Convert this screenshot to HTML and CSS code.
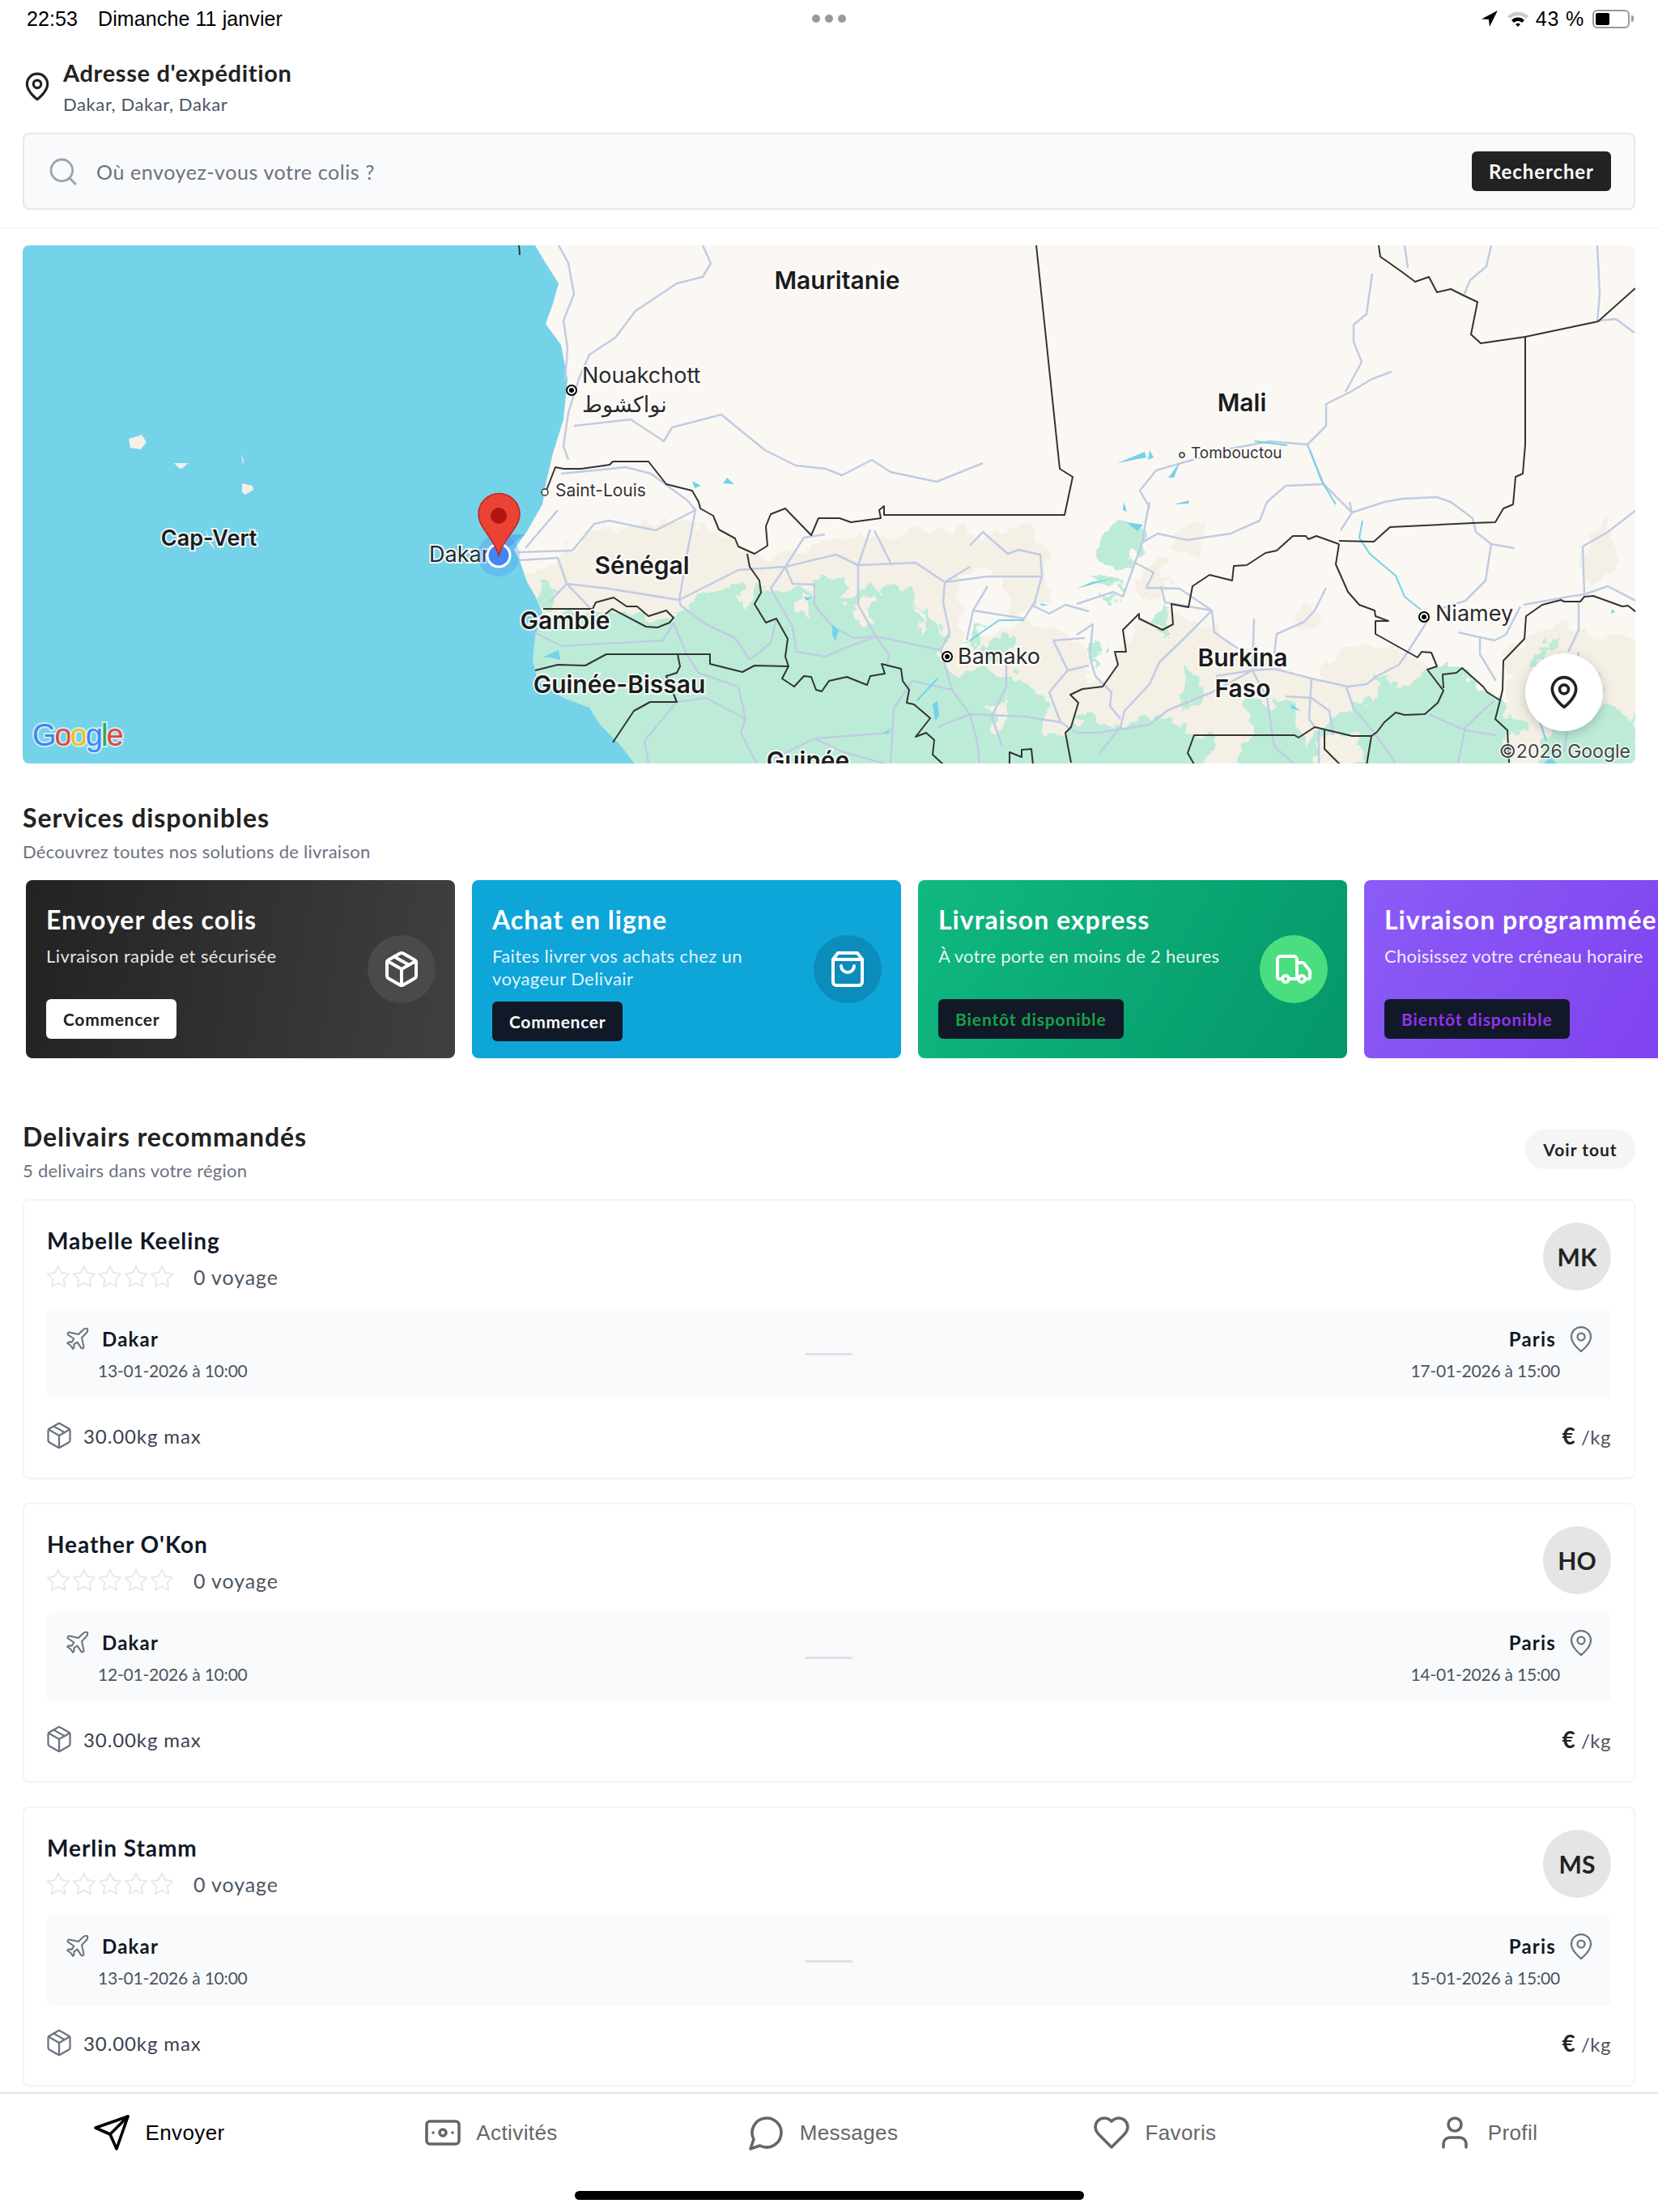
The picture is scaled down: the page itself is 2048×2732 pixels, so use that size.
FILE: index.html
```html
<!DOCTYPE html>
<html lang="fr">
<head>
    <meta charset="UTF-8">
    <title>Delivair</title>
    <link rel="stylesheet" href="styles.css">
</head>
<body>
<svg class="defs" width="0" height="0">
    <filter id="rough" x="0" y="0" width="100%" height="100%"><feTurbulence type="fractalNoise" baseFrequency="0.045" numOctaves="3" seed="7"/><feDisplacementMap in="SourceGraphic" scale="34" xChannelSelector="R" yChannelSelector="G"/></filter>
    <symbol id="i-pin" viewBox="0 0 24 24"><path d="M20 10c0 6-8 12-8 12s-8-6-8-12a8 8 0 0 1 16 0Z"/><circle cx="12" cy="10" r="3"/></symbol>
    <symbol id="i-search" viewBox="0 0 24 24"><circle cx="11" cy="11" r="8"/><path d="m21 21-4.300-4.300"/></symbol>
    <symbol id="i-box" viewBox="0 0 24 24"><path d="m7.500 4.270 9 5.150"/><path d="M21 8a2 2 0 0 0-1-1.730l-7-4a2 2 0 0 0-2 0l-7 4A2 2 0 0 0 3 8v8a2 2 0 0 0 1 1.730l7 4a2 2 0 0 0 2 0l7-4A2 2 0 0 0 21 16Z"/><path d="m3.300 7 8.700 5 8.700-5"/><path d="M12 22V12"/></symbol>
    <symbol id="i-bag" viewBox="0 0 24 24"><path d="M6 2 3 6v14a2 2 0 0 0 2 2h14a2 2 0 0 0 2-2V6l-3-4Z"/><path d="M3 6h18"/><path d="M16 10a4 4 0 0 1-8 0"/></symbol>
    <symbol id="i-truck" viewBox="0 0 24 24"><path d="M14 18V6a2 2 0 0 0-2-2H4a2 2 0 0 0-2 2v11a1 1 0 0 0 1 1h2"/><path d="M15 18H9"/><path d="M19 18h2a1 1 0 0 0 1-1v-3.650a1 1 0 0 0-.22-.624l-3.480-4.350A1 1 0 0 0 17.520 8H14"/><circle cx="17" cy="18" r="2"/><circle cx="7" cy="18" r="2"/></symbol>
    <symbol id="i-plane" viewBox="0 0 24 24"><path d="M17.800 19.200 16 11l3.500-3.500C21 6 21.500 4 21 3c-1-.5-3 0-4.500 1.500L13 8 4.800 6.200c-.5-.1-.9.1-1.100.5l-.3.5c-.2.5-.1 1 .3 1.300L9 12l-2 3H4l-1 1 3 2 2 3 1-1v-3l3-2 3.500 5.300c.3.4.8.5 1.300.3l.5-.2c.4-.3.6-.7.5-1.200z"/></symbol>
    <symbol id="i-star" viewBox="0 0 24 24"><polygon points="12 2 15.090 8.260 22 9.270 17 14.140 18.180 21.020 12 17.770 5.820 21.020 7 14.140 2 9.270 8.910 8.260 12 2"/></symbol>
    <symbol id="i-send" viewBox="0 0 24 24"><path d="m22 2-7 20-4-9-9-4Z"/><path d="M22 2 11 13"/></symbol>
    <symbol id="i-money" viewBox="0 0 24 24"><rect width="20" height="14" x="2" y="5" rx="2"/><circle cx="12" cy="12" r="2"/><path d="M6 12h.01M18 12h.01"/></symbol>
    <symbol id="i-chat" viewBox="0 0 24 24"><path d="M7.900 20A9 9 0 1 0 4 16.100L2 22Z"/></symbol>
    <symbol id="i-heart" viewBox="0 0 24 24"><path d="M19 14c1.490-1.460 3-3.210 3-5.500A5.500 5.500 0 0 0 16.500 3c-1.760 0-3 .5-4.500 2-1.500-1.500-2.740-2-4.500-2A5.500 5.500 0 0 0 2 8.500c0 2.300 1.500 4.050 3 5.500l7 7Z"/></symbol>
    <symbol id="i-user" viewBox="0 0 24 24"><path d="M19 21v-2a4 4 0 0 0-4-4H9a4 4 0 0 0-4 4v2"/><circle cx="12" cy="7" r="4"/></symbol>
</svg>

<div class="status_bar">
    <div class="status_left"><span>22:53</span><span>Dimanche 11 janvier</span></div>
    <div class="status_dots"><i></i><i></i><i></i></div>
    <div class="status_right">
        <svg class="status_arrow" viewBox="0 0 20 20"><path d="M19 1 1 10.500l8 .5 1 8Z"/></svg>
        <svg class="status_wifi" viewBox="0 0 28 20"><path class="wifi_off" d="M1 7a19 19 0 0 1 26 0l-3 3a15 15 0 0 0-20 0Z"/><path d="M6 12a11 11 0 0 1 16 0l-3 3a7 7 0 0 0-10 0Z"/><path d="M11 17a4 4 0 0 1 6 0l-3 3Z"/></svg>
        <span>43 %</span>
        <div class="battery"><div class="battery_fill"></div></div>
        <div class="battery_nub"></div>
    </div>
</div>

<div class="top_block">
    <div class="address">
        <svg class="icon address_pin"><use href="#i-pin"/></svg>
        <div>
            <div class="address_title">Adresse d'expédition</div>
            <div class="address_sub">Dakar, Dakar, Dakar</div>
        </div>
    </div>
    <div class="search_box">
        <svg class="icon search_icon"><use href="#i-search"/></svg>
        <div class="search_text">Où envoyez-vous votre colis ?</div>
        <div class="search_btn">Rechercher</div>
    </div>
</div>

<div class="content">
    <div class="map_wrap">
        <svg class="map_svg" viewBox="28 303 1992 640" width="1992" height="640">
            <rect class="land" x="28" y="303" width="1992" height="640"/>
            <g filter="url(#rough)">
                <g class="beige">
                    <path d="M700 690 729 655 854 640 926 680 950 690 1000 672 1050 665 1100 660 1170 655 1240 660 1270 650 1300 690 1262 720 1210 700 1180 720 1190 800 1260 770 1300 775 1345 800 1345 960H620V720Z"/>
                    <path d="M1389 788 1448 751 1497 778 1547 808 1620 835 1647 808 1683 791 1751 811 1774 828 1765 855 1700 885 1692 908 1692 960H1479L1470 908 1330 915V855L1375 828Z"/>
                    <path d="M1860 800 1930 770 2000 790 2040 800V960H1855Z"/>
                    <path d="M1240 700 1290 690 1300 745 1250 760Z"/>
                    <path d="M1405 700 1440 690 1445 730 1410 745Z"/>
                    <path d="M1450 655 1490 650 1480 680 1450 680Z"/>
                    <path d="M1990 640 2000 700 1960 730 1950 690Z"/>
                    <path d="M1600 760 1625 750 1620 780Z"/>
                </g>
                <g class="green_spot">
                    <path d="M630 770 700 760 760 755 830 765 863 734 890 724 908 721 921 750 935 724 952 727 988 731 1010 731 1010 714 1042 714 1042 747 1064 727 1086 734 1113 721 1131 741 1144 761 1171 781 1162 808 1176 835 1220 828 1252 835 1287 855 1310 888 1340 888 1389 895 1443 885 1475 905 1520 925 1560 900 1600 925 1670 868 1730 855 1765 825 1805 828 1850 865 1880 900 1900 960H630Z"/>
                    <path d="M1353 690 1375 647 1411 650 1407 677 1389 697Z"/>
                    <path d="M1341 709 1389 717 1370 730Z"/>
                    <path d="M1355 735 1375 735 1368 752Z"/>
                    <path d="M1430 750 1442 750 1440 785 1430 780Z"/>
                    <path d="M1462 825 1480 825 1482 865 1462 870Z"/>
                    <path d="M1540 860 1600 870 1610 930 1540 925Z"/>
                    <path d="M1695 840 1715 835 1725 855 1700 865Z"/>
                    <path d="M1190 790 1215 775 1205 800Z"/>
                    <path d="M1210 800 1260 780 1240 815Z"/>
                    <path d="M1910 800 1925 785 1900 830 1890 825Z"/>
                    <path d="M1920 870 2020 880 2030 960 1900 960Z"/>
                    <path d="M1960 830 1985 850 1950 870Z"/>
                    <path d="M1345 790 1365 800 1355 830Z"/>
                    <path d="M670 715 690 725 680 750 665 745Z"/>
                </g>
                <g class="beige">
                    <path d="M985 738 1002 735 996 762 985 755Z"/>
                    <path d="M1060 745 1070 735 1080 775 1060 770Z"/>
                    <path d="M1128 745 1140 755 1135 785Z"/>
                    <path d="M1290 880 1320 860 1325 910 1290 905Z"/>
                    <path d="M1220 880 1245 865 1240 905Z"/>
                    <path d="M1500 900 1530 895 1530 945 1490 945Z"/>
                    <path d="M1630 910 1680 905 1680 950 1620 950Z"/>
                    <path d="M1860 905 1910 910 1900 950 1870 950Z"/>
                </g>
            </g>
            <path class="sea" d="M28 303H661L674 325 690 350 683 375 674 400 693 426 701 468 696 518 683 560 674 598 670 623 651 656 635 679 642 692 651 719 661 736 670 757 661 786 658 815 664 841 696 862 728 874 741 895 766 920 789 950H28Z"/>
            <g class="rivers">
                <path d="M690 303 702 325 709 363 696 396 701 430 698 470"/>
                <path d="M868 303 878 325 868 342 836 350 785 384 760 417 728 438 715 468 702 510 696 551 702 568"/>
                <path d="M709 526 779 518 820 545 830 528 891 512 919 535 945 556 983 575 1020 579 1040 587 1077 568 1100 583 1157 595 1214 572"/>
                <path d="M693 585 773 577 804 585 849 618 859 630 810 655 752 643 734 647 707 680"/>
                <path d="M689 630 649 677"/>
                <path d="M640 682 707 680"/>
                <path d="M640 692 689 689 700 721 752 727 839 741 912 704 970 700 1033 685 1060 698 1131 695 1167 719 1220 712 1287 712"/>
                <path d="M859 630 850 677 839 741 841 748 872 771 908 788 926 815 952 794 959 764"/>
                <path d="M700 721 678 744M700 721 729 751"/>
                <path d="M660 781 694 798 819 791 832 769"/>
                <path d="M832 769 848 808 863 831 912 848 921 888 915 905 935 944"/>
                <path d="M921 888 872 862 836 867"/>
                <path d="M836 867 796 915 801 942"/>
                <path d="M952 727 970 700 979 721 1006 722 1006 747 1028 774 1055 788 1082 786 1162 803"/>
                <path d="M952 727 979 774 984 805 1019 811 1042 801 1082 786 1098 808 1096 820"/>
                <path d="M1075 654 1060 698 1060 747 1082 786"/>
                <path d="M1080 655 1100 695"/>
                <path d="M1019 660 993 664 970 700"/>
                <path d="M1198 674 1214 657 1245 684 1258 679 1285 685 1287 711 1278 744 1265 764 1202 754 1194 791"/>
                <path d="M1198 700 1167 719 1165 744 1173 781 1162 803 1176 852 1198 882 1207 915 1210 945"/>
                <path d="M1220 724 1202 754"/>
                <path d="M1176 852 1127 841 1104 875 1100 942"/>
                <path d="M1100 905 1006 912 952 939"/>
                <path d="M1006 912 1042 929 1100 945"/>
                <path d="M1198 882 1265 885 1310 892 1330 905"/>
                <path d="M1198 882 1158 898"/>
                <path d="M1301 791 1340 788"/>
                <path d="M1274 747 1296 758 1316 747 1345 755"/>
                <path d="M1301 791 1319 828 1345 822"/>
                <path d="M1319 828 1296 855 1310 892"/>
                <path d="M1243 821 1243 848 1225 885 1238 922"/>
                <path d="M1420 620 1414 650 1411 670 1402 695 1425 707 1416 726 1457 727 1497 754 1500 781 1529 801"/>
                <path d="M1719 459 1695 468 1668 484 1638 499 1638 526 1615 549 1568 545 1521 554 1428 581 1408 606 1420 627"/>
                <path d="M1695 338 1688 388 1672 401 1672 422 1682 447 1662 484"/>
                <path d="M1615 549 1635 598 1588 600 1565 620 1556 643 1520 659 1466 667 1430 659 1411 670"/>
                <path d="M1635 598 1670 633 1656 655"/>
                <path d="M1667 620 1670 633 1710 620 1732 616 1775 614 1792 620 1819 640 1823 657 1842 672 1871 677"/>
                <path d="M1842 672 1835 717 1810 742 1778 752"/>
                <path d="M1765 764 1737 808 1728 821 1701 835 1688 845 1665 848 1620 838 1574 826 1547 828"/>
                <path d="M1638 726 1624 754 1611 768 1577 783 1574 808"/>
                <path d="M1549 764 1547 828 1565 862 1574 922 1600 945"/>
                <path d="M1502 835 1547 828 1497 855 1443 877 1420 895 1357 905 1330 905"/>
                <path d="M1434 724 1439 744 1497 754"/>
                <path d="M1497 754 1457 794 1432 818 1420 845 1389 878 1384 898 1357 932"/>
                <path d="M1330 784 1350 771 1346 811 1353 835 1373 855 1371 872 1384 888"/>
                <path d="M1330 746 1375 731 1387 737 1402 695"/>
                <path d="M1588 860 1620 862 1642 878 1647 908"/>
                <path d="M1620 838 1617 888 1624 898"/>
                <path d="M1663 848 1672 875 1692 898 1719 935 1724 945"/>
                <path d="M1629 902 1629 945"/>
                <path d="M1828 786 1828 808 1848 841"/>
                <path d="M1846 865 1810 898 1801 942"/>
                <path d="M1765 882 1810 902 1848 908"/>
                <path d="M1955 675 1957 734 1986 724 2030 747"/>
                <path d="M1955 675 1986 657 2030 623"/>
                <path d="M1882 747 1937 737 1957 734"/>
                <path d="M1950 743 1950 778 1937 805"/>
                <path d="M1801 781 1846 791 1860 784 1878 749"/>
                <path d="M1735 303 1739 331"/>
                <path d="M1842 303 1836 329 1816 346 1808 365"/>
                <path d="M1973 303 1976 363 1973 396 1996 394 2019 411"/>
                <path d="M1950 805 1932 929"/>
            </g>
            <g class="water">
                <path d="M1380 572 1414 558 1416 565Z"/>
                <path d="M1420 556 1425 565 1418 568Z"/>
                <path d="M1443 590 1458 570 1450 590Z"/>
                <path d="M1449 623 1469 618 1468 622Z"/>
                <path d="M1388 620 1392 632 1387 630Z"/>
                <path d="M1028 771 1036 778 1032 792 1028 784Z"/>
                <path d="M993 737 1004 738 996 742Z"/>
                <path d="M1152 870 1158 865 1160 885 1155 890Z"/>
                <path d="M1595 870 1607 878 1595 875Z"/>
                <path d="M1330 727 1348 719 1375 714 1345 723Z"/>
                <path d="M1391 645 1412 648 1405 656Z"/>
                <path d="M1991 752 1995 756 1990 758Z"/>
                <path d="M1285 745 1296 748 1286 748Z"/>
                <path d="M1091 905 1102 899 1095 906Z"/>
                <path d="M670 812 690 803 692 815 680 812Z"/>
                <path d="M898 590 907 598 893 597Z"/>
                <path d="M855 594 866 600 858 603Z"/>
                <path d="M1905 945 1915 935 1925 945Z"/>
                <path class="water_line" d="M1683 643 1679 664 1692 684 1724 711 1735 737 1755 753"/>
                <path class="water_line" d="M1158 838 1133 865"/>
                <path class="water_line" d="M1234 766 1198 791M1234 766H1265"/>
                <path class="water_line" d="M1900 885 1910 915"/>
                <path class="water_line" d="M1550 545 1590 550"/>
                <path class="water_line" d="M1618 556 1632 593 1650 623"/>
            </g>
            <g class="islands">
                <path d="M159 542 175 537 181 546 174 555 161 553Z"/>
                <path d="M215 572 232 572 226 578 222 579Z"/>
                <path d="M298 560 301 570 300 574Z"/>
                <path d="M299 597 312 600 313 605 303 611 299 608Z"/>
                <path d="M254 654 260 668 266 680 258 670Z"/>
            </g>
            <g class="borders">
                <path d="M641 303 642 315"/>
                <path d="M1280 303 1309 579 1325 589 1315 636H1092V625L1086 630 1088 640 1051 645 1037 640H1011L1002 661 970 628 952 635 946 650 948 674 932 684 912 675 908 665 888 654 881 637 865 628 863 620 855 606 823 598 801 570H757L753 574 718 579H696L686 577 674 608"/>
                <path d="M923 684 926 700 938 717 940 732 932 746 946 769 959 764 973 789 970 811 974 823 966 838 981 848 993 835 1002 836 1008 852 1015 854 1024 841 1046 836 1071 846 1075 835 1093 832 1089 820 1113 826 1115 841 1123 852 1120 868 1129 870 1149 887 1131 910 1144 905 1154 914 1152 932 1165 944"/>
                <path d="M661 828 689 821 723 822 749 808H877V820L917 830 932 822 973 823"/>
                <path d="M837 808 840 823 836 831 823 835 836 867H803L783 878 757 917"/>
                <path d="M671 752H732L736 744 758 738 774 749H787L801 761 823 754 832 763 827 769 812 775 798 774 756 752 747 759"/>
                <path d="M1654 672 1626 662 1616 666 1613 662H1597L1577 680 1563 683 1540 698 1524 699 1522 717 1494 710 1473 724 1468 750 1447 746 1449 771 1436 778 1407 764V758L1387 778 1391 805H1377L1381 821 1362 848 1337 851 1322 858 1332 868 1323 898 1316 905 1323 942"/>
                <path d="M1654 668 1697 669 1717 651 1819 646 1847 645 1857 628 1869 623 1872 589 1881 585 1884 549V416L1829 424 1817 413 1825 373 1808 365 1792 357 1775 361 1765 342 1748 348 1732 336 1705 317 1703 303"/>
                <path d="M1884 416 1974 397 2020 356"/>
                <path d="M1654 672 1650 697 1665 731 1679 747 1698 754 1699 761 1715 767H1699V783L1751 812 1756 805 1768 806 1775 823 1763 827 1783 853 1776 868 1760 882 1735 883 1724 880 1710 892 1701 904 1694 909H1670L1624 898 1604 911 1599 908H1475L1467 930 1475 944"/>
                <path d="M2030 763 2011 748 2004 749 1968 736 1957 737 1952 743H1932L1928 741 1905 747 1885 761 1883 789 1857 816 1856 852 1853 865 1847 888 1862 902 1864 942"/>
                <path d="M1783 850 1782 833 1799 831 1806 825 1832 848 1837 855 1853 865"/>
                <path d="M1694 909 1688 945"/>
                <path d="M1636 902V925L1656 945"/>
                <path d="M1247 945V929L1262 935V926L1274 925 1276 945"/>
            </g>
            <text class="lbl lbl_country" x="1034" y="357" text-anchor="middle">Mauritanie</text>
            <text class="lbl lbl_country" x="1534" y="508" text-anchor="middle">Mali</text>
            <text class="lbl lbl_country" x="793" y="709" text-anchor="middle">Sénégal</text>
            <text class="lbl lbl_country" x="698" y="777" text-anchor="middle">Gambie</text>
            <text class="lbl lbl_country" x="765" y="856" text-anchor="middle">Guinée-Bissau</text>
            <text class="lbl lbl_country" x="998" y="950" text-anchor="middle">Guinée</text>
            <text class="lbl lbl_country lbl_narrow" x="258" y="674" text-anchor="middle">Cap-Vert</text>
            <text class="lbl lbl_country" x="1535" y="823" text-anchor="middle">Burkina</text>
            <text class="lbl lbl_country" x="1535" y="861" text-anchor="middle">Faso</text>
            <text class="lbl lbl_city" x="719" y="473">Nouakchott</text>
            <text class="lbl lbl_city" x="719" y="509">نواكشوط</text>
            <text class="lbl lbl_small" x="686" y="613">Saint-Louis</text>
            <text class="lbl lbl_small lbl_tomb" x="1471" y="566">Tombouctou</text>
            <text class="lbl lbl_city" x="1183" y="820">Bamako</text>
            <text class="lbl lbl_city" x="1773" y="767">Niamey</text>
            <text class="lbl lbl_city" x="530" y="694">Dakar</text>
            <circle class="city_big" cx="706" cy="482" r="6"/><circle cx="706" cy="482" r="3"/>
            <circle class="city_big" cx="1170" cy="811" r="6"/><circle cx="1170" cy="811" r="3"/>
            <circle class="city_big" cx="1759" cy="762" r="6"/><circle cx="1759" cy="762" r="3"/>
            <circle class="city_small" cx="673" cy="608" r="4"/>
            <circle class="city_small" cx="1460" cy="562" r="3"/>
            <circle class="me_halo" cx="616" cy="686" r="26"/>
            <path class="me_cone" d="M616 686 630 660H648Z"/>
            <circle class="me_dot" cx="616" cy="686" r="14"/>
            <path class="pin_red" d="M616 686C610 664 591 652 591 635a25.500 25.500 0 0 1 51 0C642 652 622 664 616 686Z"/>
            <circle class="pin_dot" cx="616" cy="637" r="10"/>
            <text class="google" x="40" y="921"><tspan fill="#4285f4">G</tspan><tspan fill="#ea4335">o</tspan><tspan fill="#fbbc05">o</tspan><tspan fill="#4285f4">g</tspan><tspan fill="#34a853">l</tspan><tspan fill="#ea4335">e</tspan></text>
            <text class="map_copy" x="2014" y="936" text-anchor="end">©2026 Google</text>
        </svg>
        <div class="locate_btn"><svg class="icon"><use href="#i-pin"/></svg></div>
    </div>

    <div class="section_title">Services disponibles</div>
    <div class="section_sub">Découvrez toutes nos solutions de livraison</div>

    <div class="service_row">
        <div class="service dark">
            <div class="service_text">
                <div class="service_title">Envoyer des colis</div>
                <div class="service_desc">Livraison rapide et sécurisée</div>
            </div>
            <div class="service_circle"><svg class="icon"><use href="#i-box"/></svg></div>
            <div class="service_btn btn_white">Commencer</div>
        </div>
        <div class="service blue">
            <div class="service_text">
                <div class="service_title">Achat en ligne</div>
                <div class="service_desc">Faites livrer vos achats chez un voyageur Delivair</div>
            </div>
            <div class="service_circle"><svg class="icon"><use href="#i-bag"/></svg></div>
            <div class="service_btn btn_dark">Commencer</div>
        </div>
        <div class="service green_card">
            <div class="service_text">
                <div class="service_title">Livraison express</div>
                <div class="service_desc">À votre porte en moins de 2 heures</div>
            </div>
            <div class="service_circle"><svg class="icon"><use href="#i-truck"/></svg></div>
            <div class="service_btn btn_soon txt_green">Bientôt disponible</div>
        </div>
        <div class="service purple">
            <div class="service_text">
                <div class="service_title">Livraison programmée</div>
                <div class="service_desc">Choisissez votre créneau horaire</div>
            </div>
            <div class="service_circle"><svg class="icon"><use href="#i-box"/></svg></div>
            <div class="service_btn btn_soon txt_purple">Bientôt disponible</div>
        </div>
    </div>

    <div class="list_head">
        <div>
            <div class="section_title">Delivairs recommandés</div>
            <div class="section_sub">5 delivairs dans votre région</div>
        </div>
        <div class="see_all">Voir tout</div>
    </div>

    <div class="driver">
        <div class="driver_top">
            <div>
                <div class="driver_name">Mabelle Keeling</div>
                <div class="driver_rating">
                    <svg class="icon star"><use href="#i-star"/></svg><svg class="icon star"><use href="#i-star"/></svg><svg class="icon star"><use href="#i-star"/></svg><svg class="icon star"><use href="#i-star"/></svg><svg class="icon star"><use href="#i-star"/></svg>
                    <span class="trips">0 voyage</span>
                </div>
            </div>
            <div class="avatar">MK</div>
        </div>
        <div class="route">
            <div>
                <div class="route_city"><svg class="icon route_icon"><use href="#i-plane"/></svg>Dakar</div>
                <div class="route_date">13-01-2026 à 10:00</div>
            </div>
            <div class="route_line"></div>
            <div class="route_end">
                <div class="route_city">Paris<svg class="icon route_icon"><use href="#i-pin"/></svg></div>
                <div class="route_date">17-01-2026 à 15:00</div>
            </div>
        </div>
        <div class="driver_foot">
            <div class="weight"><svg class="icon"><use href="#i-box"/></svg>30.00kg max</div>
            <div class="price"><b>€</b> /kg</div>
        </div>
    </div>

    <div class="driver">
        <div class="driver_top">
            <div>
                <div class="driver_name">Heather O'Kon</div>
                <div class="driver_rating">
                    <svg class="icon star"><use href="#i-star"/></svg><svg class="icon star"><use href="#i-star"/></svg><svg class="icon star"><use href="#i-star"/></svg><svg class="icon star"><use href="#i-star"/></svg><svg class="icon star"><use href="#i-star"/></svg>
                    <span class="trips">0 voyage</span>
                </div>
            </div>
            <div class="avatar">HO</div>
        </div>
        <div class="route">
            <div>
                <div class="route_city"><svg class="icon route_icon"><use href="#i-plane"/></svg>Dakar</div>
                <div class="route_date">12-01-2026 à 10:00</div>
            </div>
            <div class="route_line"></div>
            <div class="route_end">
                <div class="route_city">Paris<svg class="icon route_icon"><use href="#i-pin"/></svg></div>
                <div class="route_date">14-01-2026 à 15:00</div>
            </div>
        </div>
        <div class="driver_foot">
            <div class="weight"><svg class="icon"><use href="#i-box"/></svg>30.00kg max</div>
            <div class="price"><b>€</b> /kg</div>
        </div>
    </div>

    <div class="driver">
        <div class="driver_top">
            <div>
                <div class="driver_name">Merlin Stamm</div>
                <div class="driver_rating">
                    <svg class="icon star"><use href="#i-star"/></svg><svg class="icon star"><use href="#i-star"/></svg><svg class="icon star"><use href="#i-star"/></svg><svg class="icon star"><use href="#i-star"/></svg><svg class="icon star"><use href="#i-star"/></svg>
                    <span class="trips">0 voyage</span>
                </div>
            </div>
            <div class="avatar">MS</div>
        </div>
        <div class="route">
            <div>
                <div class="route_city"><svg class="icon route_icon"><use href="#i-plane"/></svg>Dakar</div>
                <div class="route_date">13-01-2026 à 10:00</div>
            </div>
            <div class="route_line"></div>
            <div class="route_end">
                <div class="route_city">Paris<svg class="icon route_icon"><use href="#i-pin"/></svg></div>
                <div class="route_date">15-01-2026 à 15:00</div>
            </div>
        </div>
        <div class="driver_foot">
            <div class="weight"><svg class="icon"><use href="#i-box"/></svg>30.00kg max</div>
            <div class="price"><b>€</b> /kg</div>
        </div>
    </div>
</div>

<div class="nav">
    <div class="nav_row">
        <div class="nav_item active"><svg class="icon"><use href="#i-send"/></svg><span>Envoyer</span></div>
        <div class="nav_item"><svg class="icon"><use href="#i-money"/></svg><span>Activités</span></div>
        <div class="nav_item"><svg class="icon"><use href="#i-chat"/></svg><span>Messages</span></div>
        <div class="nav_item"><svg class="icon"><use href="#i-heart"/></svg><span>Favoris</span></div>
        <div class="nav_item"><svg class="icon"><use href="#i-user"/></svg><span>Profil</span></div>
    </div>
    <div class="home_bar"></div>
</div>
</body>
</html>
```

FILE: styles.css
```css
* {
    box-sizing: border-box;
}
html, body {
    margin: 0;
    height: 2732px;
    overflow: hidden;
    background: #fff;
}
body {
    display: flex;
    flex-direction: column;
    font-family: "Lato", "Noto Sans", sans-serif;
    color: #222;
}
.defs {
    position: absolute;
}
.icon {
    fill: none;
    stroke: currentColor;
    stroke-width: 2;
    stroke-linecap: round;
    stroke-linejoin: round;
    flex: none;
}

/* barre de statut */
.status_bar {
    height: 46px;
    padding: 0 33px;
    display: grid;
    grid-template-columns: 1fr auto 1fr;
    align-items: center;
    font-family: "Liberation Sans", sans-serif;
    font-size: 25px;
    color: #000;
}
.status_left {
    display: flex;
    gap: 25px;
    letter-spacing: .1px;
}
.status_dots {
    display: flex;
    gap: 6px;
}
.status_dots i {
    width: 10px;
    height: 10px;
    border-radius: 50%;
    background: #999;
}
.status_right {
    display: flex;
    justify-content: flex-end;
    align-items: center;
    position: relative;
    right: -3px;
    letter-spacing: .8px;
}
.status_arrow {
    width: 22px;
    height: 22px;
    margin-right: 10px;
}
.status_wifi {
    width: 28px;
    height: 20px;
    margin-right: 8px;
}
.wifi_off {
    fill: #ccc;
}
.battery {
    width: 46px;
    height: 23px;
    margin-left: 10px;
    border: 2px solid #999;
    border-radius: 6px;
    padding: 2px;
}
.battery_fill {
    width: 17px;
    height: 100%;
    background: #000;
    border-radius: 2px;
}
.battery_nub {
    width: 3px;
    height: 8px;
    margin-left: 2px;
    background: #999;
    border-radius: 0 3px 3px 0;
}

/* adresse + recherche */
.top_block {
    padding: 25px 28px 22px;
    border-bottom: 2px solid #f3f4f6;
}
.address {
    display: flex;
    align-items: center;
    gap: 13px;
}
.address_pin {
    width: 38px;
    height: 38px;
    margin-left: -1px;
}
.address_title {
    font-size: 29px;
    font-weight: 700;
    line-height: 38px;
    letter-spacing: .65px;
}
.address_sub {
    font-size: 22px;
    line-height: 28px;
    margin-top: 6px;
    letter-spacing: .6px;
    color: #4b5563;
}
.search_box {
    display: flex;
    align-items: center;
    height: 95px;
    margin-top: 21px;
    padding: 0 28px 0 31px;
    background: #f9fafb;
    border: 2px solid #e5e7eb;
    border-radius: 8px;
}
.search_icon {
    width: 40px;
    height: 40px;
    margin: 0 21px 0 -3px;
    color: #9ca3af;
    stroke-width: 1.7;
}
.search_text {
    flex: 1;
    font-size: 25px;
    letter-spacing: .6px;
    color: #6b7280;
}
.search_btn {
    width: 172px;
    height: 49px;
    line-height: 49px;
    text-align: center;
    background: #222;
    color: #fff;
    font-size: 24px;
    font-weight: 700;
    letter-spacing: .9px;
    border-radius: 6px;
}

/* carte */
.content {
    flex: 1;
    min-height: 0;
    overflow: hidden;
    padding: 20px 28px 0;
}
.map_wrap {
    position: relative;
    height: 640px;
    border-radius: 8px;
    overflow: hidden;
    margin-bottom: 49px;
}
.map_svg {
    display: block;
}
.sea { fill: #74d3e9; }
.land { fill: #fbf8f3; }
.beige path { fill: #f4f0e6; }
.green_spot path { fill: #bcecd8; }
.rivers path {
    fill: none;
    stroke: #c0cce3;
    stroke-width: 2.5;
    stroke-linejoin: round;
}
.water path { fill: #74d3e9; }
.water .water_line {
    fill: none;
    stroke: #74d3e9;
    stroke-width: 2;
}
.islands path { fill: #f3f0e6; }
.borders path {
    fill: none;
    stroke: #333;
    stroke-width: 2;
    stroke-linejoin: round;
}
.lbl {
    font-family: "Inter", "Liberation Sans", "DejaVu Sans", sans-serif;
    fill: #1c1c1c;
    stroke: #fff;
    stroke-width: 4px;
    stroke-opacity: .85;
    paint-order: stroke;
}
.lbl_country {
    font-size: 30px;
    font-weight: 600;
}
.lbl_narrow {
    font-size: 27px;
}
.lbl_city {
    font-size: 27px;
    fill: #2a2a2a;
}
.lbl_small {
    font-size: 21px;
    fill: #333;
}
.lbl_tomb {
    font-size: 19px;
}
.city_big { fill: #fff; stroke: #000; stroke-width: 2; }
.city_small { fill: #fff; stroke: #333; stroke-width: 1.5; }
.me_halo { fill: #4285f4; opacity: .28; }
.me_cone { fill: #4285f4; opacity: .4; }
.me_dot { fill: #4285f4; stroke: #fff; stroke-width: 3; }
.pin_red { fill: #ea4335; stroke: #c5221f; stroke-width: 1.5; }
.pin_dot { fill: #b31412; }
.google {
    font-family: "Liberation Sans", sans-serif;
    font-size: 38px;
    letter-spacing: -2px;
    stroke: #fff;
    stroke-width: 4px;
    stroke-opacity: .6;
    paint-order: stroke;
}
.map_copy {
    font-family: "Inter", sans-serif;
    font-size: 23px;
    fill: #444;
    stroke: #fff;
    stroke-width: 3px;
    stroke-opacity: .7;
    paint-order: stroke;
}
.locate_btn {
    position: absolute;
    right: 40px;
    bottom: 34px;
    width: 96px;
    height: 96px;
    margin-bottom: 6px;
    border-radius: 50%;
    background: #fff;
    box-shadow: 0 4px 14px rgba(0, 0, 0, .2);
    display: flex;
    align-items: center;
    justify-content: center;
    color: #222;
}
.locate_btn svg {
    width: 44px;
    height: 44px;
}

/* titres de section */
.section_title {
    font-size: 32px;
    font-weight: 700;
    line-height: 36px;
    letter-spacing: .95px;
}
.section_sub {
    font-size: 22px;
    line-height: 28px;
    margin-top: 10px;
    letter-spacing: .25px;
    color: #6b7280;
}

/* services */
.service_row {
    display: flex;
    gap: 21px;
    margin: 21px -28px 0 4px;
    width: 2300px;
}
.service {
    width: 530px;
    height: 220px;
    flex: none;
    padding: 32px 25px 0;
    border-radius: 8px;
    color: #fff;
    position: relative;
}
.service_text {
    height: 115px;
}
.service_title {
    font-size: 32px;
    font-weight: 700;
    line-height: 34px;
    letter-spacing: 1px;
    white-space: nowrap;
}
.service_desc {
    font-size: 22px;
    line-height: 28px;
    margin-top: 14px;
    width: 370px;
    letter-spacing: .4px;
    color: rgba(255, 255, 255, .9);
}
.green_card .service_desc, .purple .service_desc {
    width: 400px;
    letter-spacing: .25px;
}
.service_circle {
    position: absolute;
    right: 24px;
    top: 68px;
    width: 84px;
    height: 84px;
    border-radius: 50%;
    display: flex;
    align-items: center;
    justify-content: center;
}
.service_circle svg {
    width: 48px;
    height: 48px;
}
.service_btn {
    display: inline-block;
    height: 49px;
    line-height: 49px;
    padding: 0 21px;
    border-radius: 6px;
    font-size: 21px;
    font-weight: 700;
    letter-spacing: .7px;
}
.dark {
    background: linear-gradient(100deg, #222, #404040);
}
.dark .service_circle { background: #4a4a4a; }
.blue {
    background: #0ea5d9;
}
.blue .service_circle { background: #0c8cba; }
.blue .service_btn { margin-top: 3px; }
.green_card {
    background: linear-gradient(120deg, #10b981, #059669);
}
.green_card .service_circle { background: #4ade80; }
.purple {
    background: linear-gradient(120deg, #8b5cf6, #7c3aed);
}
.purple .service_circle { background: #a78bfa; }
.btn_white { background: #fff; color: #222; }
.btn_dark { background: #111827; color: #fff; }
.btn_soon { background: #111827; letter-spacing: .9px; }
.txt_green { color: #16a34a; }
.txt_purple { color: #9333ea; }

/* delivairs */
.list_head {
    display: flex;
    justify-content: space-between;
    align-items: flex-start;
    margin-top: 79px;
}
.see_all {
    margin-top: 9px;
    width: 136px;
    height: 49px;
    line-height: 49px;
    text-align: center;
    background: #f5f5f5;
    border-radius: 25px;
    font-size: 21px;
    font-weight: 700;
    letter-spacing: 1px;
}
.driver {
    height: 346px;
    margin-top: 29px;
    padding: 27px 28px 0;
    border: 2px solid #f3f4f6;
    border-radius: 8px;
}
.list_head + .driver {
    margin-top: 21px;
}
.driver_top {
    display: flex;
    justify-content: space-between;
}
.driver_name {
    margin-top: 4px;
    font-size: 28px;
    font-weight: 700;
    line-height: 36px;
    letter-spacing: .95px;
    color: #111827;
}
.driver_rating {
    display: flex;
    align-items: center;
    height: 28px;
    margin: 13px 0 0 -2px;
}
.star {
    width: 32px;
    height: 32px;
    color: #e5e7eb;
    stroke-width: 1.4;
}
.trips {
    margin-left: 23px;
    font-size: 25px;
    letter-spacing: .9px;
    color: #4b5563;
}
.avatar {
    width: 84px;
    height: 84px;
    border-radius: 50%;
    background: #e5e5e5;
    color: #222;
    font-size: 30px;
    font-weight: 700;
    line-height: 84px;
    text-align: center;
}
.route {
    display: grid;
    grid-template-columns: 1fr 58px 1fr;
    align-items: center;
    height: 112px;
    margin-top: 22px;
    padding: 0 24px;
    background: #f9fafb;
    border-radius: 8px;
}
.route_city {
    display: flex;
    align-items: center;
    height: 30px;
    font-size: 24px;
    font-weight: 700;
    letter-spacing: 1.2px;
    color: #111827;
}
.route_icon {
    color: #6b7280;
    stroke-width: 1.5;
    width: 33px;
    height: 33px;
    margin: 0 14px 0 -3px;
}
.route_date {
    margin: 11px 0 0 39px;
    font-size: 21px;
    line-height: 26px;
    letter-spacing: -.2px;
    color: #4b5563;
}
.route_end {
    text-align: right;
}
.route_end .route_city {
    justify-content: flex-end;
}
.route_end .route_icon {
    width: 36px;
    height: 36px;
    margin: 0 -5px 0 13px;
}
.route_end .route_date {
    margin: 11px 39px 0 0;
}
.route_line {
    height: 3px;
    background: #dfe1e5;
}
.driver_foot {
    display: flex;
    justify-content: space-between;
    align-items: center;
    height: 30px;
    margin-top: 30px;
    font-size: 24px;
    color: #374151;
}
.weight {
    display: flex;
    align-items: center;
    gap: 12px;
    letter-spacing: .9px;
}
.weight svg {
    width: 36px;
    height: 36px;
    margin-left: -3px;
    color: #6b7280;
    stroke-width: 1.5;
}
.price {
    color: #4b5563;
    letter-spacing: .5px;
}
.price b {
    color: #222;
    font-size: 28px;
}

/* barre de navigation */
.nav {
    height: 148px;
    flex: none;
    border-top: 2px solid #e5e5e5;
    padding: 26px 16px 0 0;
    background: #fff;
    font-family: "Liberation Sans", sans-serif;
    font-size: 26px;
    letter-spacing: .4px;
    color: #666;
}
.nav_row {
    display: grid;
    grid-template-columns: repeat(5, 410px);
    justify-content: center;
}
.nav_item {
    display: flex;
    align-items: center;
    justify-content: center;
    gap: 17px;
    height: 44px;
}
.nav_item svg {
    width: 48px;
    height: 48px;
    stroke-width: 1.8;
}
.nav_item.active {
    color: #000;
}
.home_bar {
    width: 629px;
    height: 11px;
    margin: 50px 0 0 710px;
    background: #000;
    border-radius: 6px;
}
```
